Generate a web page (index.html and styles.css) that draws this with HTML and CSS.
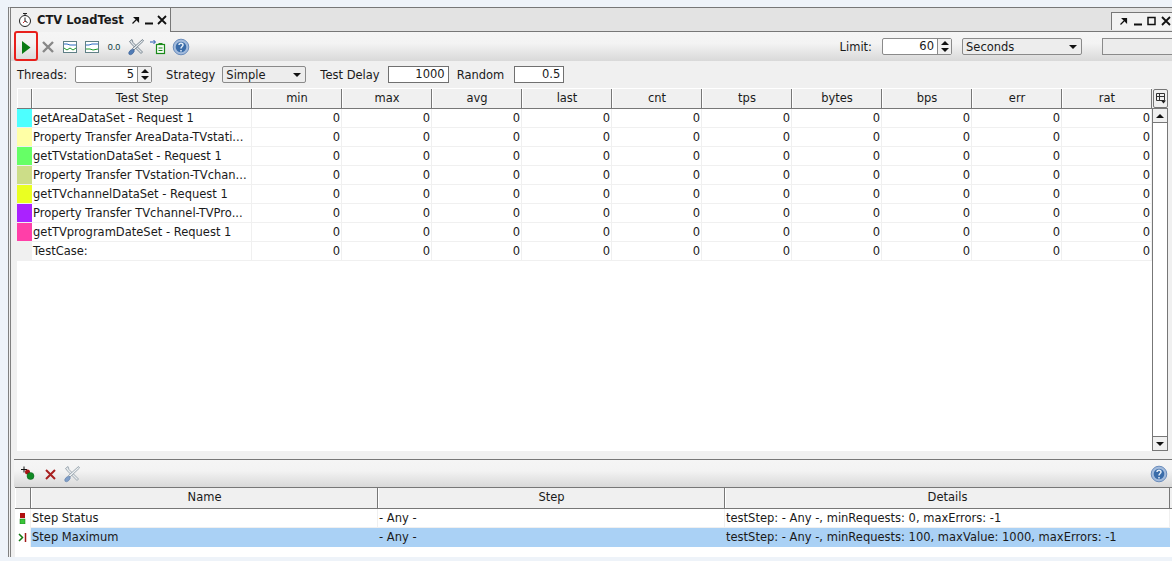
FILE: index.html
```html
<!DOCTYPE html>
<html lang="en">
<head>
    <meta charset="UTF-8">
    <meta name="viewport" content="width=device-width, initial-scale=1.0">
    <title>CTV LoadTest</title>
    <link rel="stylesheet" href="styles.css">
</head>
<body>
    <div class="frame">
        <div class="tab-bar">
            <div class="tab">
                <svg class="tab-icon" width="16" height="16" viewBox="0 0 16 16"><circle cx="8" cy="9" r="5.500" fill="#fff" stroke="#222"/><path d="M6 1.500h4M8 2v2M8 9V5.500M8 9l2.500 1.500" fill="none" stroke="#222"/><path d="M8 9l-2 2" stroke="#c33"/></svg>
                <span class="tab-title">CTV LoadTest</span>
                <svg class="win-btn" width="12" height="10" viewBox="0 0 12 10"><path d="M2.500 8.500l3.500-3.500M4.500 2.500h4v4z" stroke="#111" stroke-width="1.200" fill="#111"/></svg>
                <svg class="win-btn" width="12" height="10" viewBox="0 0 12 10"><path d="M2 8.500h8" stroke="#111" stroke-width="2"/></svg>
                <svg class="win-btn" width="12" height="10" viewBox="0 0 12 10"><path d="M2 1l8 8M10 1L2 9" stroke="#111" stroke-width="1.800"/></svg>
            </div>
            <div class="tab-fill"></div>
            <div class="win-box">
                <svg width="12" height="10" viewBox="0 0 12 10"><path d="M2.500 8.500l3.500-3.500M4.500 2.500h4v4z" stroke="#111" stroke-width="1.200" fill="#111"/></svg>
                <svg width="12" height="10" viewBox="0 0 12 10"><path d="M2 8.500h8" stroke="#111" stroke-width="2"/></svg>
                <svg width="12" height="10" viewBox="0 0 12 10"><rect x="2" y="1.500" width="7" height="7" fill="none" stroke="#111" stroke-width="1.500"/></svg>
                <svg width="12" height="10" viewBox="0 0 12 10"><path d="M2 1l8 8M10 1L2 9" stroke="#111" stroke-width="1.800"/></svg>
            </div>
        </div>

        <div class="toolbar main-toolbar">
            <div class="tool-group">
                <svg class="tool" width="16" height="18" viewBox="0 0 16 18"><path d="M4 3l8.500 6.500L4 16z" fill="#0a7a14"/></svg>
                <svg class="tool" width="16" height="18" viewBox="0 0 16 18"><path d="M3 4l10 10M13 4L3 14" stroke="#888" stroke-width="2.400"/></svg>
                <svg class="tool" width="16" height="18" viewBox="0 0 16 18"><rect x="1.500" y="3.500" width="13" height="11" fill="#fff" stroke="#5f8086"/><path d="M2 6h3l3 1h6" stroke="#2a6ac0" fill="none"/><path d="M2 10l3 2 3-2 3 2 3-2" stroke="#1a9a2a" fill="none"/></svg>
                <svg class="tool" width="16" height="18" viewBox="0 0 16 18"><rect x="1.500" y="3.500" width="13" height="11" fill="#fff" stroke="#5f8086"/><path d="M2 7h3l3-1h6" stroke="#2a6ac0" fill="none"/><path d="M2 11h4l3 1 5-1" stroke="#1a9a2a" fill="none"/></svg>
                <span class="tool-stat">0.0</span>
                <svg class="tool" width="16" height="18" viewBox="0 0 16 18"><path d="M1.500 3.500L4 1.500l1 3 9.500 9.500-1.500 1.500L3.500 6z" fill="#dfe4e8" stroke="#5f707c" stroke-width=".8"/><path d="M14.500 1.500l1 1.500L6 12l-1.500-1.500z" fill="#e8ecef" stroke="#5f707c" stroke-width=".8"/><ellipse cx="3.500" cy="14" rx="3.300" ry="2" fill="#4f7bb5" stroke="#37598c" stroke-width=".5" transform="rotate(-45 3.500 14)"/></svg>
                <svg class="tool" width="16" height="18" viewBox="0 0 16 18"><path d="M0 4h5M3.500 2L5.500 4l-2 2" fill="none" stroke="#1f55b0"/><rect x="6.500" y="6.500" width="8" height="9" fill="#f4faf4" stroke="#1a8a1a" stroke-width="1.200"/><path d="M8.500 10h4M8.500 12.500h4M8.500 5.500h4" stroke="#1a8a1a"/></svg>
                <svg class="tool" width="18" height="18" viewBox="0 0 18 18"><circle cx="9" cy="9" r="7.800" fill="#a3bbdc" stroke="#6b8dbc"/><circle cx="9" cy="9" r="5.300" fill="#3a6ca9"/><path d="M7 7c0-2.500 4-2.500 4 0 0 1.500-2 1.500-2 3.500" fill="none" stroke="#e4edf7" stroke-width="1.500"/><path d="M9 12v1.500" stroke="#e4edf7" stroke-width="1.500"/></svg>
            </div>
            <div class="limit-group">
                <span class="field-label">Limit:</span>
                <div class="spinner limit-spinner">
                    <span class="spinner-value">60</span>
                    <span class="spinner-arrows"><i class="arrow-up"></i><i class="arrow-down"></i></span>
                </div>
                <div class="combo seconds-combo"><span>Seconds</span><i class="arrow-down"></i></div>
                <div class="progress"></div>
            </div>
        </div>

        <div class="options-row">
            <span class="field-label threads-label">Threads:</span>
            <div class="spinner threads-spinner">
                <span class="spinner-value">5</span>
                <span class="spinner-arrows"><i class="arrow-up"></i><i class="arrow-down"></i></span>
            </div>
            <span class="field-label strategy-label">Strategy</span>
            <div class="combo strategy-combo"><span>Simple</span><i class="arrow-down"></i></div>
            <span class="field-label delay-label">Test Delay</span>
            <div class="text-field delay-field">1000</div>
            <span class="field-label random-label">Random</span>
            <div class="text-field random-field">0.5</div>
        </div>

        <div class="stats-table">
            <div class="stats-body">
                <div class="stats-row stats-head">
                    <div class="head-cell"></div>
                    <div class="head-cell">Test Step</div>
                    <div class="head-cell">min</div>
                    <div class="head-cell">max</div>
                    <div class="head-cell">avg</div>
                    <div class="head-cell">last</div>
                    <div class="head-cell">cnt</div>
                    <div class="head-cell">tps</div>
                    <div class="head-cell">bytes</div>
                    <div class="head-cell">bps</div>
                    <div class="head-cell">err</div>
                    <div class="head-cell">rat</div>
                </div>
                <div id="stats-rows"></div>
            </div>
            <div class="scroll-col">
                <div class="corner-btn">
                    <svg width="12" height="13" viewBox="0 0 12 13"><path d="M1.500 1.500h8v7h-8zM1.500 4.500h8M4.500 1.500v7" fill="none" stroke="#333"/><path d="M6 8.500h5l-2.500 3z" fill="#222"/></svg>
                </div>
                <div class="scrollbar">
                    <div class="scroll-btn"><i class="arrow-up big"></i></div>
                    <div class="scroll-thumb"></div>
                    <div class="scroll-btn"><i class="arrow-down big"></i></div>
                </div>
            </div>
        </div>

        <div class="toolbar assert-toolbar">
            <div class="tool-group">
                <svg class="tool" width="18" height="18" viewBox="0 0 18 18"><path d="M1 4.500h6M4 1.500v6" stroke="#111"/><circle cx="7.500" cy="7" r="2.500" fill="#a81414"/><circle cx="10.500" cy="11" r="3.500" fill="#0f8a24" stroke="#0a5a18" stroke-width=".5"/></svg>
                <svg class="tool" width="16" height="18" viewBox="0 0 16 18"><path d="M3 5l9 9M12 5l-9 9" stroke="#a82020" stroke-width="2"/></svg>
                <svg class="tool" width="16" height="18" viewBox="0 0 16 18"><path d="M1.500 3.500L4 1.500l1 3 9.500 9.500-1.500 1.500L3.500 6z" fill="#e6eaed" stroke="#8a98a2" stroke-width=".8"/><path d="M14.500 1.500l1 1.500L6 12l-1.500-1.500z" fill="#eef1f3" stroke="#8a98a2" stroke-width=".8"/><ellipse cx="3.500" cy="14" rx="3.300" ry="2" fill="#7f9ec8" stroke="#5f7ea8" stroke-width=".5" transform="rotate(-45 3.500 14)"/></svg>
            </div>
            <svg class="help-right" width="18" height="18" viewBox="0 0 18 18"><circle cx="9" cy="9" r="7.800" fill="#a3bbdc" stroke="#6b8dbc"/><circle cx="9" cy="9" r="5.300" fill="#3a6ca9"/><path d="M7 7c0-2.500 4-2.500 4 0 0 1.500-2 1.500-2 3.500" fill="none" stroke="#e4edf7" stroke-width="1.500"/><path d="M9 12v1.500" stroke="#e4edf7" stroke-width="1.500"/></svg>
        </div>

        <div class="assert-table">
            <div class="assert-row assert-head">
                <div class="head-cell"></div>
                <div class="head-cell">Name</div>
                <div class="head-cell">Step</div>
                <div class="head-cell">Details</div>
            </div>
            <div class="assert-row">
                <div class="assert-icon">
                    <svg width="8" height="11" viewBox="0 0 8 11"><rect x="1" y="0" width="5" height="5" fill="#b01010"/><rect x="1" y="6" width="5" height="5" fill="#3ac43a" stroke="#157a15" stroke-width=".5"/></svg>
                </div>
                <div class="assert-cell">Step Status</div>
                <div class="assert-cell">- Any -</div>
                <div class="assert-cell">testStep: - Any -, minRequests: 0, maxErrors: -1</div>
            </div>
            <div class="assert-row selected">
                <div class="assert-icon">
                    <svg width="10" height="11" viewBox="0 0 10 11"><path d="M1 2l3.500 3.500L1 9" fill="none" stroke="#137a13" stroke-width="1.500"/><path d="M7.500 1v9" stroke="#a01818" stroke-width="1.500"/></svg>
                </div>
                <div class="assert-cell">Step Maximum</div>
                <div class="assert-cell">- Any -</div>
                <div class="assert-cell">testStep: - Any -, minRequests: 100, maxValue: 1000, maxErrors: -1</div>
            </div>
        </div>
    </div>

    <!-- red marker drawn over the run button -->
    <div class="run-marker"></div>

    <script>
        const steps = [
            ['#4dffff', 'getAreaDataSet - Request 1'],
            ['#ffffa6', 'Property Transfer AreaData-TVstati...'],
            ['#66ff66', 'getTVstationDataSet - Request 1'],
            ['#ccdd88', 'Property Transfer TVstation-TVchan...'],
            ['#eaff22', 'getTVchannelDataSet - Request 1'],
            ['#aa22ff', 'Property Transfer TVchannel-TVPro...'],
            ['#ff3fa8', 'getTVprogramDateSet - Request 1'],
            ['', 'TestCase:']
        ];
        const rows = document.getElementById('stats-rows');

        steps.forEach(step => {
            const row = document.createElement('div');
            row.className = 'stats-row';
            let html = '<div class="swatch"' + (step[0] ? ' style="background-color: ' + step[0] + '"' : '') + '></div>';
            html += '<div class="step-cell">' + step[1] + '</div>';
            for (let i = 0; i < 10; i++) {
                html += '<div class="num-cell">0</div>';
            }
            row.innerHTML = html;
            rows.appendChild(row);
        });
    </script>
</body>
</html>
```

FILE: styles.css
```css
body {
    font-family: 'DejaVu Sans', sans-serif;
    font-size: 11.5px;
    color: #1a1a1a;
    background-color: #eef3f9;
    margin: 0;
    overflow: hidden;
    height: 561px;
    position: relative;
}

.frame {
    margin: 7px 0 0 8px;
    height: 550px;
    border-top: 1px solid #777;
    border-left: 3px double #808080;
    background-color: #f0f0f0;
    box-sizing: border-box;
    display: flex;
    flex-direction: column;
}

.tab-bar {
    display: flex;
    height: 23px;
    border-bottom: 1px solid #777;
    background-color: #e3e3e3;
    flex-shrink: 0;
}

.tab {
    display: flex;
    align-items: center;
    gap: 1px;
    width: 160px;
    height: 24px;
    box-sizing: border-box;
    padding-left: 6px;
    background-color: #f0f0f0;
    border-right: 1px solid #777;
}

.tab-icon {
    margin-right: 3px;
}

.tab-title {
    font-weight: bold;
    margin-right: 5px;
    white-space: nowrap;
}

.win-btn {
    flex-shrink: 0;
}

.tab-fill {
    flex: 1;
}

.win-box {
    display: flex;
    align-items: center;
    gap: 2px;
    width: 54px;
    height: 12px;
    padding: 2px 0 3px 6px;
    margin-top: 4px;
    background-color: #f2f2f2;
    border-left: 1px solid #777;
    border-top: 1px solid #777;
    box-sizing: content-box;
}

.toolbar {
    display: flex;
    justify-content: space-between;
    align-items: center;
    background: linear-gradient(#f5f5f5, #f3f3f3 40%, #d9d9d9);
    flex-shrink: 0;
}

.main-toolbar {
    height: 29px;
}

.tool-group {
    display: flex;
    align-items: center;
    gap: 6px;
    padding-left: 7px;
}

.tool-stat {
    width: 16px;
    font-family: 'Liberation Sans', sans-serif;
    font-size: 9px;
    color: #0a3a40;
    text-align: center;
}

.limit-group {
    display: flex;
    align-items: center;
}

.field-label {
    white-space: nowrap;
}

.spinner {
    display: flex;
    height: 17px;
    background-color: #fff;
    border: 1px solid #8a8a8a;
    border-radius: 2px;
    box-sizing: border-box;
}

.spinner-value {
    flex: 1;
    text-align: right;
    line-height: 15px;
    padding-right: 3px;
}

.spinner-arrows {
    width: 14px;
    border-left: 1px solid #8a8a8a;
    background-color: #f0f0f0;
    display: flex;
    flex-direction: column;
    align-items: center;
    justify-content: space-around;
    padding: 1px 0;
    box-sizing: border-box;
}

.arrow-up,
.arrow-down {
    display: block;
    width: 0;
    height: 0;
    border-left: 4px solid transparent;
    border-right: 4px solid transparent;
}

.arrow-up {
    border-bottom: 4px solid #111;
}

.arrow-down {
    border-top: 4px solid #111;
}

.limit-spinner {
    width: 70px;
    margin-left: 10px;
}

.combo {
    display: flex;
    justify-content: space-between;
    align-items: center;
    height: 17px;
    padding: 0 4px 0 3px;
    background-color: #ededed;
    border: 1px solid #8a8a8a;
    border-radius: 2px;
    box-sizing: border-box;
}

.seconds-combo {
    width: 120px;
    margin-left: 10px;
}

.progress {
    width: 70px;
    height: 17px;
    margin-left: 20px;
    background-color: #ececec;
    border: 1px solid #8a8a8a;
    border-right: 0;
    box-sizing: border-box;
}

.options-row {
    display: flex;
    align-items: center;
    height: 27px;
    padding-left: 6px;
    flex-shrink: 0;
}

.threads-spinner {
    width: 77px;
    margin-left: 8px;
}

.strategy-label {
    margin-left: 14px;
}

.strategy-combo {
    width: 84px;
    margin-left: 7px;
}

.delay-label {
    margin-left: 14px;
}

.text-field {
    height: 17px;
    line-height: 15px;
    padding-right: 3px;
    text-align: right;
    background-color: #fff;
    border: 1px solid #707070;
    box-sizing: border-box;
}

.delay-field {
    width: 61px;
    margin-left: 8px;
}

.random-label {
    margin-left: 8px;
}

.random-field {
    width: 50px;
    margin-left: 10px;
}

.stats-table {
    display: flex;
    height: 371px;
    margin-left: 6px;
    flex-shrink: 0;
    box-sizing: border-box;
}

.stats-body {
    width: 1135px;
    margin-bottom: 8px;
    flex-shrink: 0;
    background-color: #fff;
}

.stats-row {
    display: grid;
    grid-template-columns: 15px 220px repeat(10, 90px);
    height: 19px;
}

.stats-head {
    height: 21px;
    background-color: #f0f0f0;
    border-bottom: 1px solid #777;
    border-top: 1px solid #fff;
    box-sizing: border-box;
}

.head-cell {
    text-align: center;
    line-height: 19px;
    border-right: 1px solid #777;
    border-left: 1px solid #fff;
    box-sizing: border-box;
    white-space: nowrap;
}

.swatch {
    border-bottom: 1px solid #f0f0f0;
    background-color: #f0f0f0;
}

.step-cell,
.num-cell {
    line-height: 18px;
    border-bottom: 1px solid #f0f0f0;
    border-right: 1px solid #f0f0f0;
    white-space: nowrap;
    overflow: hidden;
}

.step-cell {
    padding-left: 1px;
}

.num-cell {
    text-align: right;
    padding-right: 1px;
}

.scroll-col {
    width: 20px;
    display: flex;
    flex-direction: column;
    background-color: #f0f0f0;
}

.corner-btn {
    width: 15px;
    height: 19px;
    margin: 1px 0 0 1px;
    background-color: #f0f0f0;
    border: 1px solid #777;
    border-radius: 2px;
    box-sizing: border-box;
    display: flex;
    justify-content: center;
    align-items: center;
}

.scrollbar {
    flex: 1;
    width: 16px;
    margin-bottom: 8px;
    display: flex;
    flex-direction: column;
    justify-content: space-between;
}

.scroll-btn {
    height: 15px;
    background-color: #f0f0f0;
    border: 1px solid #777;
    box-sizing: border-box;
    display: flex;
    justify-content: center;
    align-items: center;
}

.scroll-thumb {
    flex: 1;
    background-color: #fff;
    border-left: 1px solid #777;
    border-right: 1px solid #777;
}

.assert-toolbar {
    height: 28px;
    border-top: 1px solid #777;
    margin-left: 3px;
    box-sizing: border-box;
}

.assert-toolbar .tool-group {
    gap: 5px;
    padding-left: 6px;
}

.help-right {
    margin-right: 4px;
}

.assert-table {
    flex: 1;
    margin-left: 4px;
    background-color: #fff;
}

.assert-row {
    display: grid;
    grid-template-columns: 16px 347px 347px 445px;
    height: 19px;
}

.assert-row.assert-head {
    height: 22px;
    background-color: #f0f0f0;
    border-top: 1px solid #777;
    border-bottom: 1px solid #777;
    box-sizing: border-box;
}

.assert-icon {
    display: flex;
    justify-content: center;
    align-items: center;
    background-color: #fff;
    border-right: 1px solid #f0f0f0;
}

.assert-cell {
    line-height: 18px;
    padding-left: 1px;
    border-right: 1px solid #f0f0f0;
    border-bottom: 1px solid #f0f0f0;
    white-space: nowrap;
}

.selected .assert-cell {
    background-color: #aad1f5;
    border-color: #aad1f5;
}

.run-marker {
    position: absolute;
    left: 14px;
    top: 31px;
    width: 24px;
    height: 30px;
    border: 2px solid #e8201c;
    border-radius: 3px;
    box-sizing: border-box;
}
```
